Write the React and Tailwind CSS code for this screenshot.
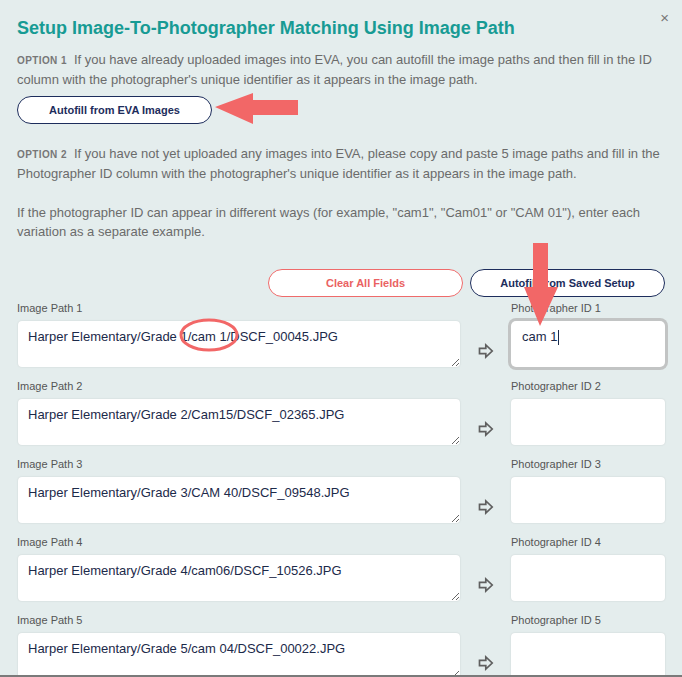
import React from 'react';

const rows = [
    { path: 'Harper Elementary/Grade 1/cam 1/DSCF_00045.JPG', id: 'cam 1', focused: true },
    { path: 'Harper Elementary/Grade 2/Cam15/DSCF_02365.JPG', id: '' },
    { path: 'Harper Elementary/Grade 3/CAM 40/DSCF_09548.JPG', id: '' },
    { path: 'Harper Elementary/Grade 4/cam06/DSCF_10526.JPG', id: '' },
    { path: 'Harper Elementary/Grade 5/cam 04/DSCF_00022.JPG', id: '' },
];

// Outlined right arrow between the path and the ID column
const ArrowIcon = () => (
    <svg width="16" height="16" viewBox="0 0 16 16" fill="none">
        <path d="M1.5 5.3h6.3V2L14.2 8l-6.4 6v-3.3H1.5z" stroke="#5f5f5f" strokeWidth="1.7" strokeLinejoin="miter" />
    </svg>
);

const App = () => {
    return (
        <div
            className="relative h-[677px] overflow-hidden bg-[#e4eded] px-[17px] border-b-2 border-[#7a7a7a]"
            style={{ fontFamily: '"Liberation Sans", Arial, sans-serif' }}
        >
            {/* Close */}
            <button className="absolute right-[13px] top-[10px] text-[15px] leading-none text-[#777]">×</button>

            <h1 className="pt-[16px] text-[18px] leading-[24px] font-bold text-[#179b94]">
                Setup Image-To-Photographer Matching Using Image Path
            </h1>

            <p className="mt-[10px] text-[13px] leading-[19px] text-[#6b6b6b]">
                <span className="mr-[7px] text-[10px] font-bold tracking-[0.4px] text-[#777]">OPTION 1</span>
                <span>If you have already uploaded images into EVA, you can autofill the image paths and then fill in the ID column with the photographer's unique identifier as it appears in the image path.</span>
            </p>

            <button className="mt-[7px] w-[195px] h-[28px] rounded-full border border-[#1d2d5c] bg-white text-[11px] font-bold text-[#1d2d5c]">
                Autofill from EVA Images
            </button>

            <p className="mt-[20px] text-[13px] leading-[19px] text-[#6b6b6b]">
                <span className="mr-[7px] text-[10px] font-bold tracking-[0.4px] text-[#777]">OPTION 2</span>
                <span>If you have not yet uploaded any images into EVA, please copy and paste 5 image paths and fill in the Photographer ID column with the photographer's unique identifier as it appears in the image path.</span>
            </p>

            <p className="mt-[20px] text-[13px] leading-[19px] text-[#6b6b6b]">
                If the photographer ID can appear in different ways (for example, "cam1", "Cam01" or "CAM 01"), enter each variation as a separate example.
            </p>

            <div className="mt-[28px] flex justify-end gap-[7px]">
                <button className="w-[195px] h-[28px] rounded-full border border-[#ef6b6b] bg-white text-[11px] font-bold text-[#ea6262]">
                    Clear All Fields
                </button>
                <button className="w-[195px] h-[28px] rounded-full border border-[#1d2d5c] bg-white text-[11px] font-bold text-[#1d2d5c]">
                    Autofill from Saved Setup
                </button>
            </div>

            <div className="mt-[4px]">
                {rows.map((row, i) => (
                    <div key={i} className="grid grid-cols-[1fr_52px_154px] mb-[12px]">
                        <div>
                            <div className="text-[11px] leading-[14px] text-[#555] mb-[6px]">Image Path {i + 1}</div>
                            <textarea
                                readOnly
                                value={row.path}
                                className="block w-full h-[46px] ml-[1px] rounded-[4px] bg-white px-[10px] pt-[8px] text-[13px] leading-[16px] text-[#1c2a4a] shadow-[0_0_2px_rgba(0,0,0,0.12)] outline-none"
                                style={{ fontFamily: '"Liberation Sans", Arial, sans-serif' }}
                            />
                        </div>
                        <div className="flex justify-center items-center pt-[34px] pl-[2px]">
                            <ArrowIcon />
                        </div>
                        <div>
                            <div className="text-[11px] leading-[14px] text-[#555] mb-[6px]">Photographer ID {i + 1}</div>
                            {row.focused ? (
                                <div className="h-[46px] rounded-[5px] bg-white px-[11px] pt-[8px] text-[13px] leading-[16px] text-[#1c2a4a] ring-[3px] ring-[#c2c4c4] flex items-start">
                                    {row.id}
                                    <span className="ml-[1px] mt-[1px] w-px h-[15px] bg-[#1c2a4a]" />
                                </div>
                            ) : (
                                <div className="h-[46px] rounded-[4px] bg-white shadow-[0_0_2px_rgba(0,0,0,0.12)]" />
                            )}
                        </div>
                    </div>
                ))}
            </div>

            {/* Annotation: left arrow pointing at the first button */}
            <svg className="absolute left-[214px] top-[92px]" width="86" height="34" viewBox="0 0 86 34">
                <polygon points="1,15 39,1 39,8 84,8 84,23 39,23 39,32" fill="#f26767" />
            </svg>

            {/* Annotation: down arrow pointing at Photographer ID 1 */}
            <svg className="absolute left-[522px] top-[243px]" width="38" height="84" viewBox="0 0 38 84">
                <polygon points="11,0 26,0 26,44 36,44 18,83 2,44 11,44" fill="#f26767" />
            </svg>

            {/* Annotation: ellipse around /cam 1/ */}
            <svg className="absolute left-[178px] top-[317px]" width="62" height="36" viewBox="0 0 62 36">
                <ellipse cx="31" cy="18" rx="28" ry="15" fill="none" stroke="#f26767" strokeWidth="3" />
            </svg>
        </div>
    );
};

export default App;
